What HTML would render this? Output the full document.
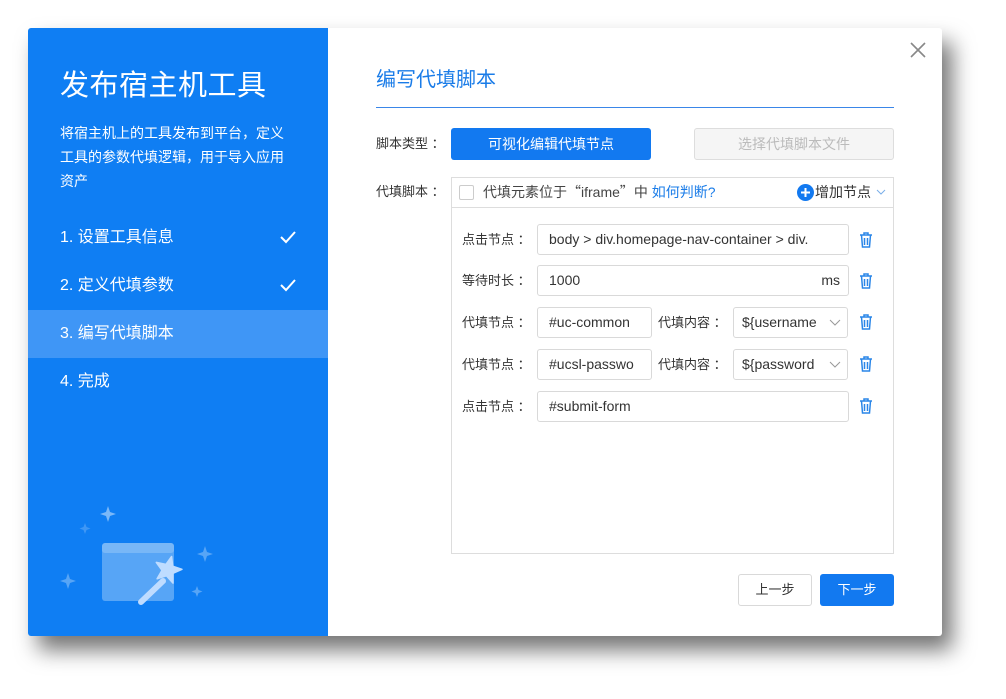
<!DOCTYPE html>
<html><head><meta charset="utf-8">
<style>
*{box-sizing:border-box;margin:0;padding:0}
body{width:1006px;height:699px;background:#fff;font-family:"Liberation Sans","Noto Sans CJK SC",sans-serif;position:relative;overflow:hidden}
.abs{position:absolute}
#dlg{left:28px;top:28px;width:914px;height:608px;background:#fff;box-shadow:10px 14px 22px rgba(0,0,0,.55);border-radius:3px;overflow:hidden}
#left{left:0;top:0;width:300px;height:608px;background:#0f7ef3;color:#fff}
.step{left:0;width:300px;height:48px;line-height:48px;padding-left:32px;font-size:16px;color:#fff}
.lbl{font-size:13px;color:#333;line-height:20px;white-space:nowrap}
.inp{border:1px solid #d9d9d9;border-radius:3px;height:31px;line-height:29px;padding-left:11px;font-size:14px;color:#333;background:#fff;white-space:nowrap;overflow:hidden}
.trash{width:16px;height:18px}
.cj{font-family:"Noto Sans CJK SC",sans-serif}
</style></head><body>
<div id="dlg" class="abs">
 <div id="left" class="abs">
  <div class="abs" style="left:32px;top:34px;font-size:29px;letter-spacing:0.5px">发布宿主机工具</div>
  <div class="abs" style="left:32px;top:93px;width:232px;font-size:14px;line-height:24px">将宿主机上的工具发布到平台，定义工具的参数代填逻辑，用于导入应用资产</div>
  <div class="abs step" style="top:186px">1. 设置工具信息</div>
  <div class="abs step" style="top:234px">2. 定义代填参数</div>
  <div class="abs step" style="top:282px;background:#3f96f6">3. 编写代填脚本</div>
  <div class="abs step" style="top:330px">4. 完成</div>
  <svg class="abs" style="left:251px;top:202px" width="18" height="14" viewBox="0 0 18 14"><path d="M2 7l5 5 9-10" stroke="#fff" stroke-width="2" fill="none"/></svg>
  <svg class="abs" style="left:251px;top:250px" width="18" height="14" viewBox="0 0 18 14"><path d="M2 7l5 5 9-10" stroke="#fff" stroke-width="2" fill="none"/></svg>
  <svg class="abs" style="left:0;top:452px" width="300" height="156" viewBox="0 452 300 156">
   <g fill="#fff">
    <path d="M80 478 l2 6 6 2 -6 2 -2 6 -2 -6 -6 -2 6 -2z" opacity=".45"/>
    <path d="M57 495 l1.5 4 4 1.5 -4 1.5 -1.5 4 -1.5 -4 -4 -1.5 4 -1.5z" opacity=".2"/>
    <path d="M40 545 l2 6 6 2 -6 2 -2 6 -2 -6 -6 -2 6 -2z" opacity=".3"/>
    <path d="M177 518 l2 6 6 2 -6 2 -2 6 -2 -6 -6 -2 6 -2z" opacity=".3"/>
    <path d="M169 558 l1.5 4 4 1.5 -4 1.5 -1.5 4 -1.5 -4 -4 -1.5 4 -1.5z" opacity=".3"/>
    <rect x="74" y="515" width="72" height="58" rx="3" opacity=".3"/>
    <rect x="74" y="515" width="72" height="10" rx="3" opacity=".2"/>
   </g>
   <path d="M113 574 L135 553" stroke="#bfdcff" stroke-width="6" stroke-linecap="round"/>
   <path d="M143.6 528.5 L144.7 538.2 L154 541.3 L145 545.3 L145 555.1 L138.4 547.8 L129.1 550.8 L134 542.3 L128.3 534.4 L137.9 536.4Z" fill="#bfdcff" stroke="#bfdcff" stroke-width="1.5" stroke-linejoin="round"/>
  </svg>
 </div>
 <svg class="abs" style="left:881px;top:13px" width="18" height="18" viewBox="0 0 18 18"><path d="M2 2l14 14M16 2L2 16" stroke="#888" stroke-width="1.6"/></svg>
 <div class="abs" style="left:348px;top:35px;font-size:20px;color:#1a7ce8">编写代填脚本</div>
 <div class="abs" style="left:348px;top:79px;width:518px;height:1px;background:#3a86e8"></div>
 <div class="abs lbl" style="left:348px;top:105px">脚本类型 <span class="cj">：</span></div>
 <div class="abs" style="left:423px;top:100px;width:200px;height:32px;background:#1279f0;color:#fff;border-radius:3px;text-align:center;line-height:32px;font-size:14px">可视化编辑代填节点</div>
 <div class="abs" style="left:666px;top:100px;width:200px;height:32px;background:#f5f5f5;border:1px solid #ddd;color:#bbb;border-radius:3px;text-align:center;line-height:30px;font-size:14px">选择代填脚本文件</div>
 <div class="abs lbl" style="left:348px;top:153px">代填脚本 <span class="cj">：</span></div>
 <div class="abs" style="left:423px;top:149px;width:443px;height:377px;border:1px solid #ddd">
  <div class="abs" style="left:0;top:0;width:441px;height:30px;border-bottom:1px solid #ddd"></div>
  <div class="abs" style="left:7px;top:7px;width:15px;height:15px;border:1px solid #ccc;border-radius:2px"></div>
  <div class="abs lbl" style="left:31px;top:4px;font-size:14px;color:#444">代填元素位于<span class="cj">“</span>iframe<span class="cj">”</span>中 <span style="color:#1a7ce8">如何判断?</span></div>
  <svg class="abs" style="left:345px;top:6px" width="17" height="17" viewBox="0 0 17 17"><circle cx="8.5" cy="8.5" r="8.5" fill="#1279f0"/><path d="M8.5 4v9M4 8.5h9" stroke="#fff" stroke-width="2"/></svg>
  <div class="abs lbl" style="left:363px;top:4px;font-size:14px;color:#333">增加节点</div>
  <svg class="abs" style="left:424px;top:10px" width="10" height="8" viewBox="0 0 10 8"><path d="M1 2l4 4 4-4" stroke="#7aaee8" fill="none"/></svg>
 </div>
 <div class="abs lbl" style="left:434px;top:201px">点击节点 <span class="cj">：</span></div>
 <div class="abs inp" style="left:509px;top:196px;width:312px">body &gt; div.homepage-nav-container &gt; div.</div>
 <div class="abs lbl" style="left:434px;top:242px">等待时长 <span class="cj">：</span></div>
 <div class="abs inp" style="left:509px;top:237px;width:312px">1000<span style="position:absolute;right:8px">ms</span></div>
 <div class="abs lbl" style="left:434px;top:284px">代填节点 <span class="cj">：</span></div>
 <div class="abs inp" style="left:509px;top:279px;width:115px">#uc-common</div>
 <div class="abs lbl" style="left:630px;top:284px">代填内容 <span class="cj">：</span></div>
 <div class="abs inp" style="left:705px;top:279px;width:115px;padding-left:8px">${username<svg style="position:absolute;right:6px;top:11px" width="12" height="8" viewBox="0 0 12 8"><path d="M1 1l5 5 5-5" stroke="#999" fill="none"/></svg></div>
 <div class="abs lbl" style="left:434px;top:326px">代填节点 <span class="cj">：</span></div>
 <div class="abs inp" style="left:509px;top:321px;width:115px">#ucsl-passwo</div>
 <div class="abs lbl" style="left:630px;top:326px">代填内容 <span class="cj">：</span></div>
 <div class="abs inp" style="left:705px;top:321px;width:115px;padding-left:8px">${password<svg style="position:absolute;right:6px;top:11px" width="12" height="8" viewBox="0 0 12 8"><path d="M1 1l5 5 5-5" stroke="#999" fill="none"/></svg></div>
 <div class="abs lbl" style="left:434px;top:368px">点击节点 <span class="cj">：</span></div>
 <div class="abs inp" style="left:509px;top:363px;width:312px">#submit-form</div>
 <svg width="0" height="0" style="position:absolute"><defs><g id="tr"><path d="M2 4h12M6 4V2h4v2M3.5 4l1 12h7l1-12M6.5 7v7M9.5 7v7" stroke="#2a86e8" stroke-width="1.5" fill="none"/></g></defs></svg>
 <svg class="abs trash" style="left:830px;top:203px" viewBox="0 0 16 18"><use href="#tr"/></svg>
 <svg class="abs trash" style="left:830px;top:244px" viewBox="0 0 16 18"><use href="#tr"/></svg>
 <svg class="abs trash" style="left:830px;top:285px" viewBox="0 0 16 18"><use href="#tr"/></svg>
 <svg class="abs trash" style="left:830px;top:327px" viewBox="0 0 16 18"><use href="#tr"/></svg>
 <svg class="abs trash" style="left:830px;top:369px" viewBox="0 0 16 18"><use href="#tr"/></svg>
 <div class="abs" style="left:710px;top:546px;width:74px;height:32px;border:1px solid #d9d9d9;border-radius:3px;text-align:center;line-height:30px;font-size:13px;color:#333">上一步</div>
 <div class="abs" style="left:792px;top:546px;width:74px;height:32px;background:#1279f0;border-radius:3px;text-align:center;line-height:32px;font-size:13px;color:#fff">下一步</div>
</div>
</body></html>
